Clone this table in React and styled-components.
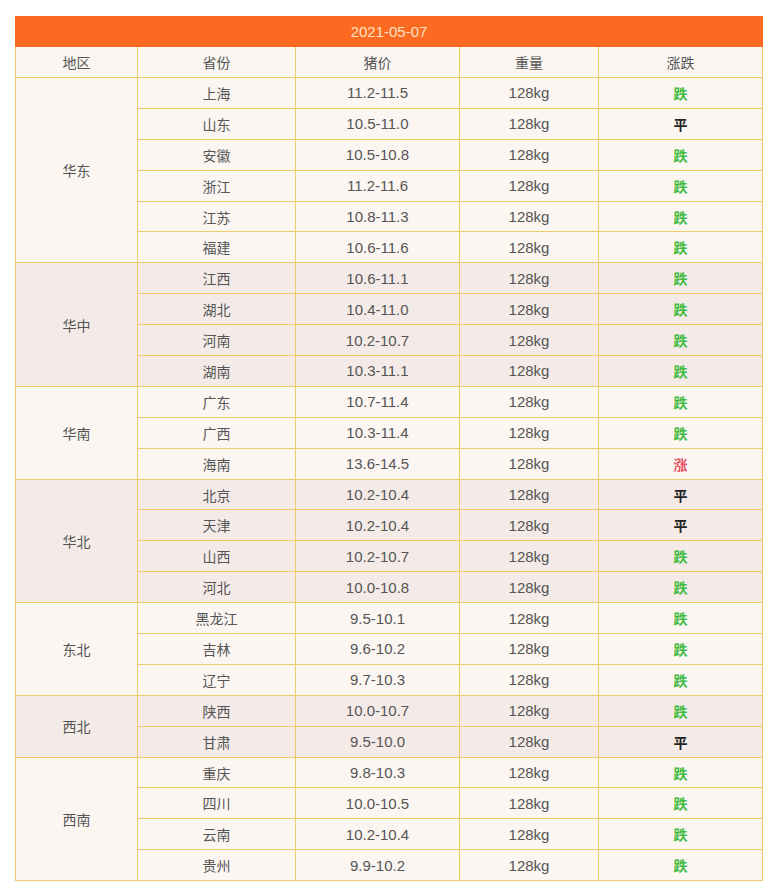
import styled, { createGlobalStyle } from 'styled-components';

const GlobalStyle = createGlobalStyle`
  body {
    margin: 0;
    background: #ffffff;
    font-family: "Liberation Sans", "Noto Sans CJK SC", sans-serif;
  }
`;

const Page = styled.div`
  padding: 16px 0 0 15px;
`;

const PriceTable = styled.table`
  width: 747px;
  border-collapse: collapse;
  table-layout: fixed;
  color: #555;
  font-size: 14px;
`;

const DateCell = styled.th`
  height: 29px;
  background: #fb6a20;
  color: #fde3c6;
  font-weight: normal;
  font-size: 15px;
  padding: 0;
  border: 1px solid #fb6a20;
`;

const HeadCell = styled.th`
  height: 30px;
  padding: 0;
  font-weight: normal;
  background: #fbf6f1;
  border: 1px solid #eecb68;
  color: #555;
`;

const Row = styled.tr`
  height: 30.9px;
  background: ${p => (p.$dark ? '#f4ebe8' : '#fbf6f2')};
`;

const Cell = styled.td`
  padding: 0;
  text-align: center;
  border: 1px solid #eecb68;
  font-size: ${p => (p.$num ? '15px' : '14px')};
`;

const TrendCell = styled(Cell)`
  font-weight: bold;
  color: ${p => (p.$trend === '跌' ? '#3fbb40' : p.$trend === '涨' ? '#e2505e' : '#222')};
`;

const groups = [
  ['华东', [['上海', '11.2-11.5', '跌'], ['山东', '10.5-11.0', '平'], ['安徽', '10.5-10.8', '跌'], ['浙江', '11.2-11.6', '跌'], ['江苏', '10.8-11.3', '跌'], ['福建', '10.6-11.6', '跌']]],
  ['华中', [['江西', '10.6-11.1', '跌'], ['湖北', '10.4-11.0', '跌'], ['河南', '10.2-10.7', '跌'], ['湖南', '10.3-11.1', '跌']]],
  ['华南', [['广东', '10.7-11.4', '跌'], ['广西', '10.3-11.4', '跌'], ['海南', '13.6-14.5', '涨']]],
  ['华北', [['北京', '10.2-10.4', '平'], ['天津', '10.2-10.4', '平'], ['山西', '10.2-10.7', '跌'], ['河北', '10.0-10.8', '跌']]],
  ['东北', [['黑龙江', '9.5-10.1', '跌'], ['吉林', '9.6-10.2', '跌'], ['辽宁', '9.7-10.3', '跌']]],
  ['西北', [['陕西', '10.0-10.7', '跌'], ['甘肃', '9.5-10.0', '平']]],
  ['西南', [['重庆', '9.8-10.3', '跌'], ['四川', '10.0-10.5', '跌'], ['云南', '10.2-10.4', '跌'], ['贵州', '9.9-10.2', '跌']]],
];

const App = () => (
  <Page>
    <GlobalStyle />
    <PriceTable>
      <colgroup>
        <col style={{ width: 122 }} />
        <col style={{ width: 158 }} />
        <col style={{ width: 164 }} />
        <col style={{ width: 139 }} />
        <col style={{ width: 164 }} />
      </colgroup>
      <thead>
        <tr>
          <DateCell colSpan={5}>2021-05-07</DateCell>
        </tr>
        <tr>
          <HeadCell>地区</HeadCell>
          <HeadCell>省份</HeadCell>
          <HeadCell>猪价</HeadCell>
          <HeadCell>重量</HeadCell>
          <HeadCell>涨跌</HeadCell>
        </tr>
      </thead>
      <tbody>
        {groups.map(([region, rows], gi) =>
          rows.map(([prov, price, trend], ri) => (
            <Row key={prov} $dark={gi % 2 === 1}>
              {ri === 0 && <Cell rowSpan={rows.length}>{region}</Cell>}
              <Cell>{prov}</Cell>
              <Cell $num>{price}</Cell>
              <Cell $num>128kg</Cell>
              <TrendCell $trend={trend}>{trend}</TrendCell>
            </Row>
          ))
        )}
      </tbody>
    </PriceTable>
  </Page>
);

export default App;
